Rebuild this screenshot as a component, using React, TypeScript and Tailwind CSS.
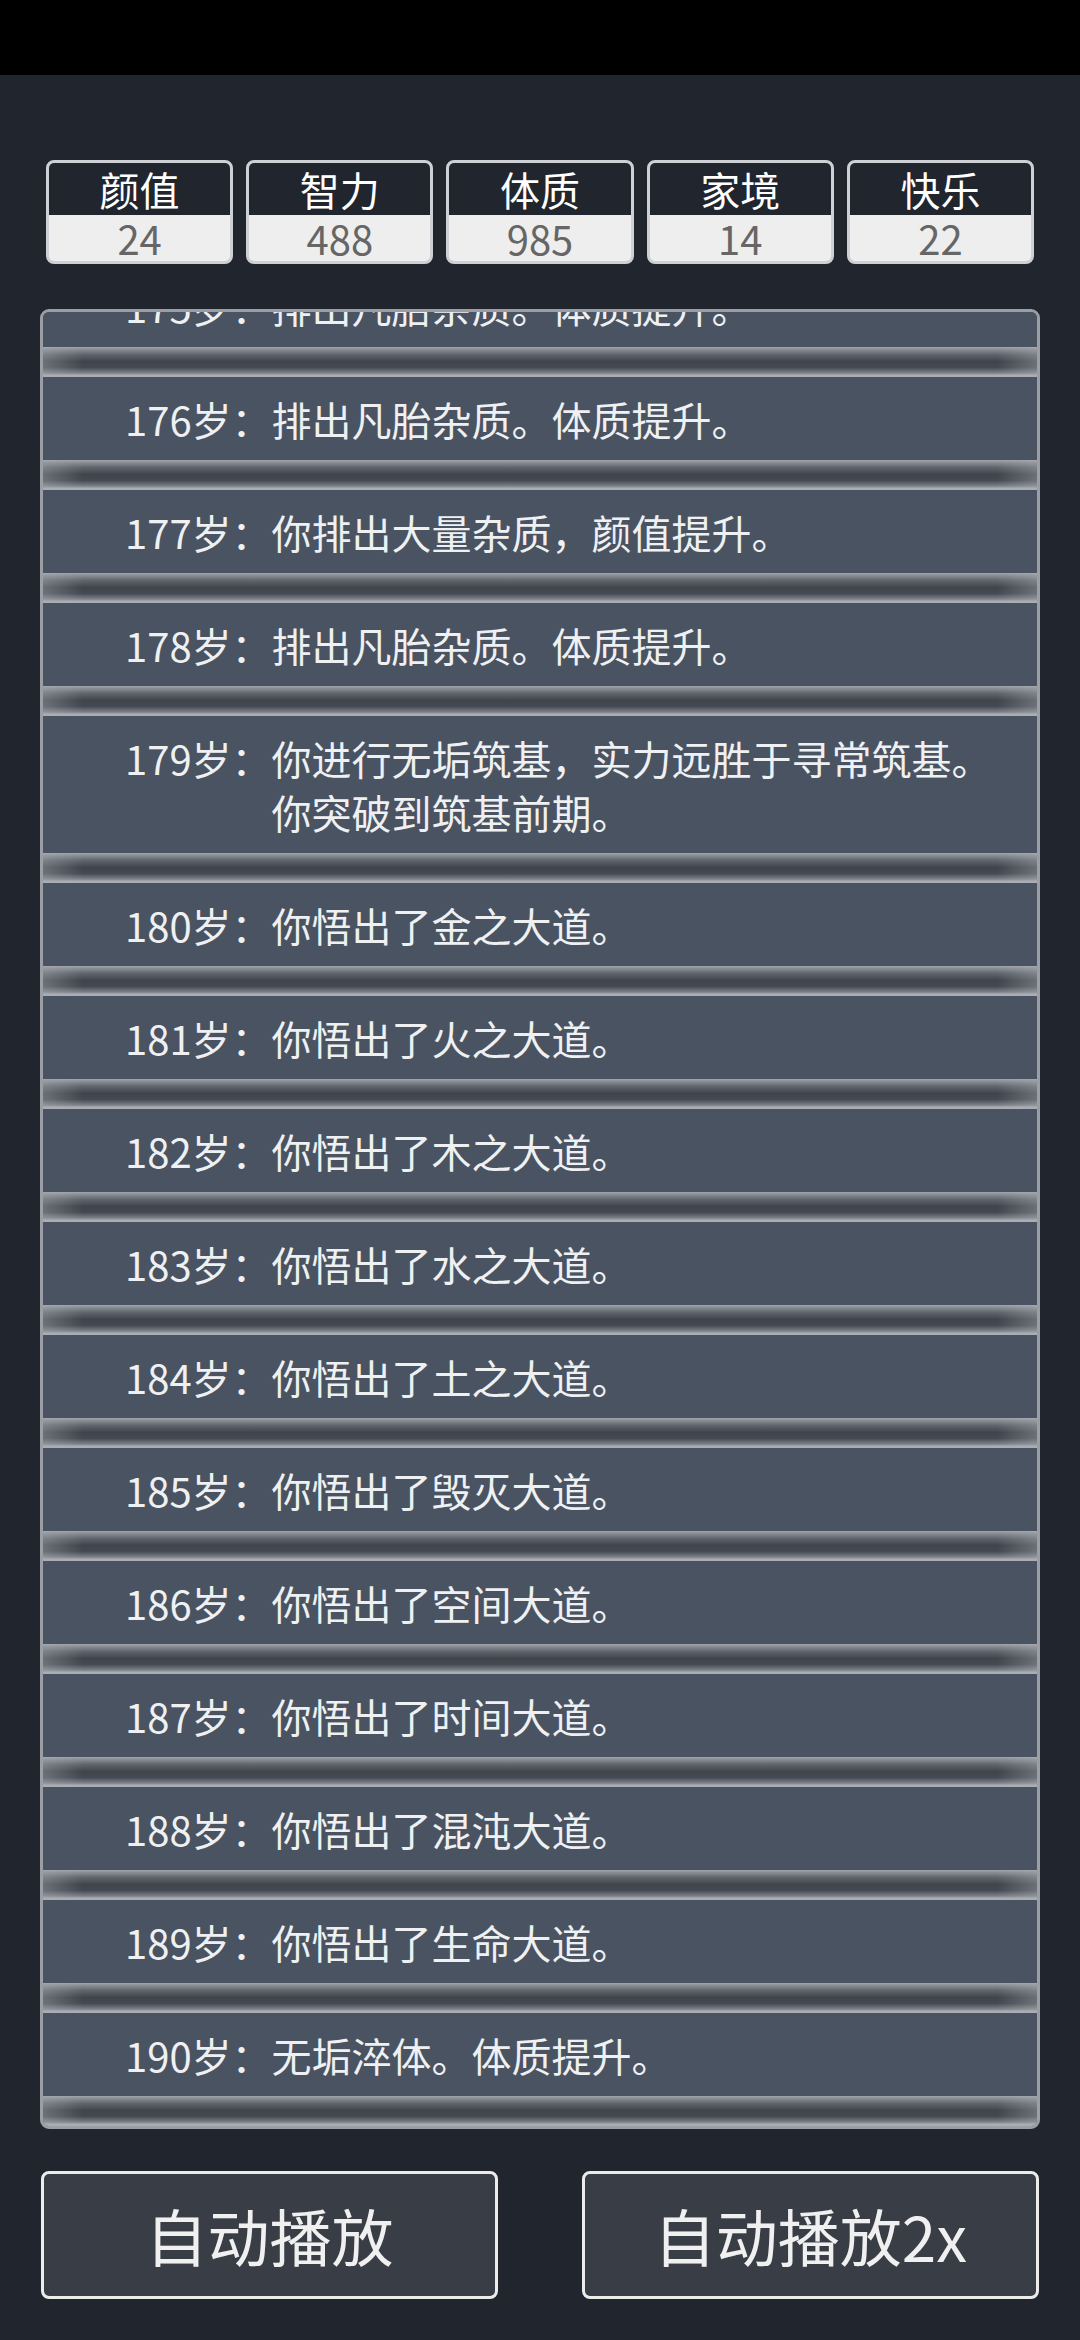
import type { ReactNode } from 'react'

const stats = [
  { label: '颜值', value: 24 },
  { label: '智力', value: 488 },
  { label: '体质', value: 985 },
  { label: '家境', value: 14 },
  { label: '快乐', value: 22 },
]

const events: { age: number; lines: string[] }[] = [
  { age: 175, lines: ['排出凡胎杂质。体质提升。'] },
  { age: 176, lines: ['排出凡胎杂质。体质提升。'] },
  { age: 177, lines: ['你排出大量杂质，颜值提升。'] },
  { age: 178, lines: ['排出凡胎杂质。体质提升。'] },
  { age: 179, lines: ['你进行无垢筑基，实力远胜于寻常筑基。', '你突破到筑基前期。'] },
  { age: 180, lines: ['你悟出了金之大道。'] },
  { age: 181, lines: ['你悟出了火之大道。'] },
  { age: 182, lines: ['你悟出了木之大道。'] },
  { age: 183, lines: ['你悟出了水之大道。'] },
  { age: 184, lines: ['你悟出了土之大道。'] },
  { age: 185, lines: ['你悟出了毁灭大道。'] },
  { age: 186, lines: ['你悟出了空间大道。'] },
  { age: 187, lines: ['你悟出了时间大道。'] },
  { age: 188, lines: ['你悟出了混沌大道。'] },
  { age: 189, lines: ['你悟出了生命大道。'] },
  { age: 190, lines: ['无垢淬体。体质提升。'] },
]

function StatBox({ label, value }: { label: string; value: number }) {
  return (
    <div className="flex h-[104px] flex-col overflow-hidden rounded-[8px] border-[3px] border-[#cdd0d4] bg-[#eeeeee]">
      <div className="flex h-[52px] items-center justify-center bg-[#20252e] text-[40px] leading-[52px] text-white">
        {label}
      </div>
      <div className="flex h-[46px] items-center justify-center text-[40px] leading-[46px] text-[#666666]">
        {value}
      </div>
    </div>
  )
}

function Groove() {
  return (
    <div className="relative h-[30px] shrink-0 bg-[linear-gradient(to_bottom,#a3a7ad_0%,#8e9299_6%,#60646c_25%,#40444c_48%,#454951_68%,#7d8189_87%,#aaaeb4_94%,#aaaeb4_100%)]">
      <div className="absolute inset-0 bg-[linear-gradient(to_right,rgba(170,174,180,0.4),transparent_4%,transparent_96%,rgba(170,174,180,0.4))]" />
    </div>
  )
}

function EventRow({ age, lines }: { age: number; lines: string[] }) {
  return (
    <>
      <div className="flex shrink-0 bg-[#4a5361] py-[14.5px] pl-[82px] pr-4 text-[40px] leading-[54px] text-[#eef0f2]">
        <span className="shrink-0">{age}岁：</span>
        <div className="flex flex-col">
          {lines.map((line) => (
            <span key={line}>{line}</span>
          ))}
        </div>
      </div>
      <Groove />
    </>
  )
}

function PlayButton({ children }: { children: ReactNode }) {
  return (
    <button className="flex h-[128px] w-[457px] items-center justify-center rounded-[8px] border-[3px] border-[#ececec] bg-[#393d46] text-[62px] leading-none text-[#f0f0f0]">
      {children}
    </button>
  )
}

export default function App() {
  return (
    <main
      className="flex h-[2340px] w-[1080px] flex-col overflow-hidden bg-[#20252e]"
      style={{ fontFamily: '"Noto Sans CJK SC", "Noto Sans", sans-serif' }}
    >
      <div className="h-[75px] shrink-0 bg-black" />

      <div className="mt-[85px] grid grid-cols-5 gap-[13px] px-[46px]">
        {stats.map((s) => (
          <StatBox key={s.label} label={s.label} value={s.value} />
        ))}
      </div>

      <section className="mx-[40px] mt-[45px] h-[1820px] shrink-0 overflow-hidden rounded-[9px] border-[3px] border-[#9b9fa5] bg-[#4a5361]">
        <div className="flex h-full flex-col justify-end overflow-hidden">
          {events.map((e) => (
            <EventRow key={e.age} age={e.age} lines={e.lines} />
          ))}
        </div>
      </section>

      <div className="mt-[42px] flex justify-between px-[41px]">
        <PlayButton>自动播放</PlayButton>
        <PlayButton>自动播放2x</PlayButton>
      </div>
    </main>
  )
}
